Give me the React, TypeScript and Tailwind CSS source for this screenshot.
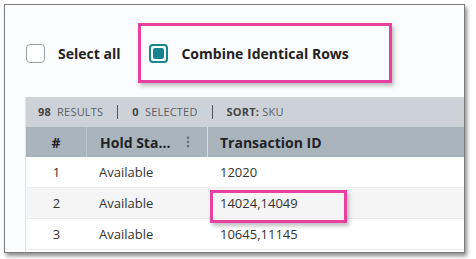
import { EllipsisVertical } from "lucide-react";

const rows = [
  { n: 1, status: "Available", tx: "12020" },
  { n: 2, status: "Available", tx: "14024,14049", mark: true },
  { n: 3, status: "Available", tx: "10645,11145" },
];

export default function App() {
  return (
    <div className="w-[476px] h-[259px] bg-white pl-[4px] pt-[4px] font-['Open_Sans',sans-serif]">
      <div className="w-[461px] h-[249px] border border-[#7d7d7d] bg-[#fbfcfe] shadow-[2px_3px_4px_rgba(0,0,0,0.45)] overflow-hidden flex flex-col">
        {/* Options */}
        <div className="h-[92px] shrink-0 flex items-center pl-[21px] pt-[4px]">
          <div className="flex items-center gap-[13px]">
            <div className="w-[19px] h-[19px] rounded-[4px] border border-[#9aa0a6] bg-white" />
            <span className="text-[14px] font-bold text-[#222]">Select all</span>
          </div>
          <div className="ml-[18px] w-[254px] h-[60px] border-[3px] border-[#e840a0] shadow-[2px_3px_4px_rgba(0,0,0,0.25)] flex items-center pl-[8px] gap-[13px]">
            <div className="w-[19px] h-[19px] rounded-[4px] border-2 border-[#17858f] bg-white flex items-center justify-center">
              <div className="w-[11px] h-[11px] rounded-[2px] bg-[#14838e]" />
            </div>
            <span className="text-[14px] font-bold text-[#222]">Combine Identical Rows</span>
          </div>
        </div>

        {/* Table */}
        <div className="ml-[20px] flex-1 bg-white border-l border-[#dfe4ea] relative">
          <div className="h-[30px] bg-[#cdd2d8] flex items-center pl-[12px] text-[11px] text-[#5a5f66] tracking-[0.2px]">
            <span><b className="text-[#444]">98</b>&nbsp; RESULTS</span>
            <span className="mx-[14px] w-px h-[14px] bg-[#555]" />
            <span><b className="text-[#444]">0</b>&nbsp; SELECTED</span>
            <span className="mx-[14px] w-px h-[14px] bg-[#555]" />
            <span><b className="text-[#444]">SORT:</b> SKU</span>
          </div>
          <div className="h-[30px] bg-[#a9b4bd] flex text-[14px] font-bold text-[#1f2328]">
            <div className="w-[61px] flex items-center justify-center border-r border-[#bcc7d1]">#</div>
            <div className="w-[121px] flex items-center justify-between pl-[13px] pr-[12px] border-r border-[#d3dde7]">
              <span>Hold Sta...</span>
              <EllipsisVertical className="w-[14px] h-[14px] text-[#6b7178]" strokeWidth={2.5} />
            </div>
            <div className="flex items-center pl-[12px]">Transaction ID</div>
          </div>
          {rows.map((r) => (
            <div
              key={r.n}
              className={
                r.n === 2
                  ? "h-[31px] flex items-center pt-[1px] text-[13px] text-[#333] bg-[#f5f5f5] border-b border-[#ececec]"
                  : "h-[31px] flex items-center pt-[1px] text-[13px] text-[#333] bg-white border-b border-[#ececec]"
              }
            >
              <div className="w-[61px] text-center">{r.n}</div>
              <div className="w-[121px] pl-[12px]">{r.status}</div>
              <div className="pl-[12px] relative">
                {r.tx}
                {r.mark && (
                  <div className="absolute left-[2px] -top-[4px] w-[137px] h-[33px] border-[3px] border-[#e840a0] shadow-[2px_3px_4px_rgba(0,0,0,0.25)]" />
                )}
              </div>
            </div>
          ))}
        </div>
      </div>
    </div>
  );
}
